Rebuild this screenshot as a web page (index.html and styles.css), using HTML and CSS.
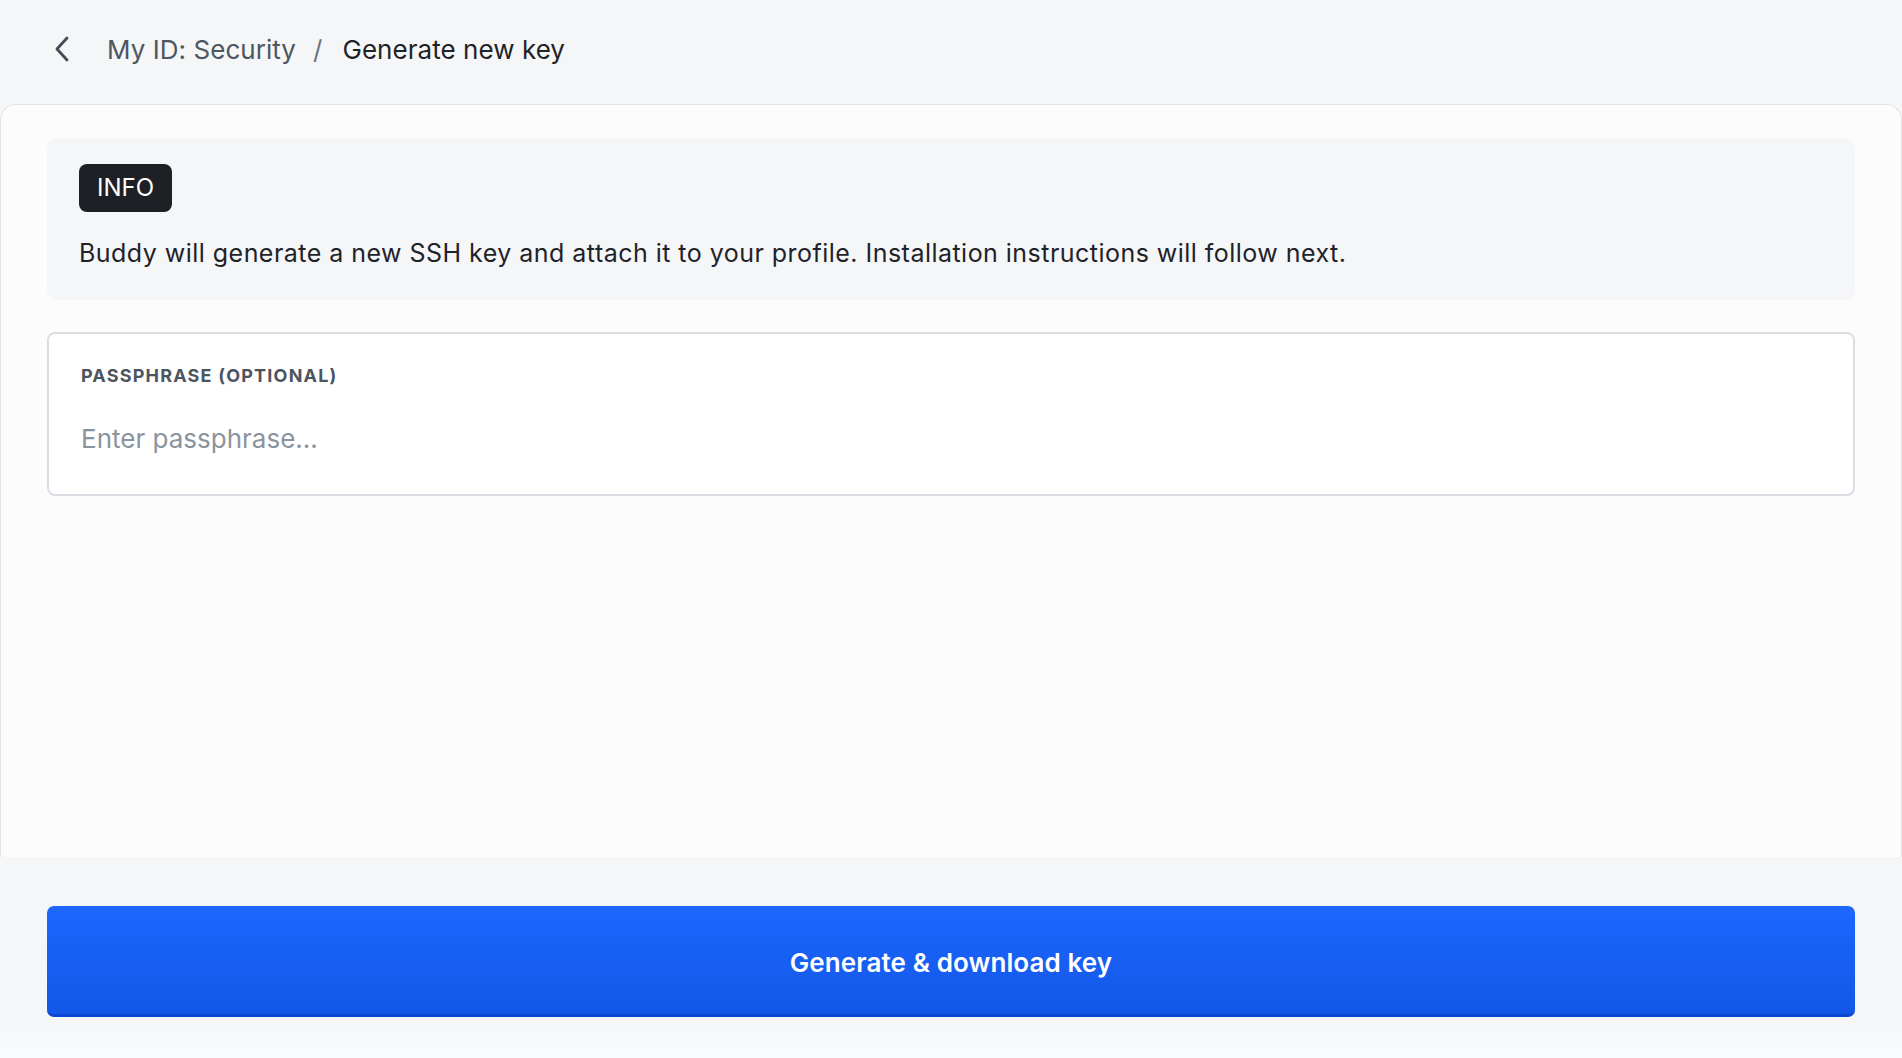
FILE: index.html
```html
<!DOCTYPE html>
<html>
<head>
  <meta charset="UTF-8" />
  <title>Generate new key</title>
  <link rel="stylesheet" href="styles.css">
</head>
<body>

<div class="topbar">
  <a class="back" href="#">
    <svg width="16" height="26" viewBox="0 0 16 26"><path d="M13 2 L3 13 L13 24" fill="none" stroke="#434b55" stroke-width="2.8" stroke-linecap="round" stroke-linejoin="round"/></svg>
  </a>
  <span class="crumb">My ID: Security</span>
  <span class="sep">/</span>
  <span class="crumb current">Generate new key</span>
</div>

<div class="card">
  <div class="info">
    <span class="badge">INFO</span>
    <p>Buddy will generate a new SSH key and attach it to your profile. Installation instructions will follow next.</p>
  </div>

  <div class="field">
    <label for="passphrase">Passphrase (optional)</label>
    <input type="text" id="passphrase" placeholder="Enter passphrase..." />
  </div>
</div>

<div class="footer">
  <button class="primary">Generate &amp; download key</button>
</div>

</body>
</html>
```

FILE: styles.css
```css
body {
  margin: 0;
  background: #f5f6f8;
  font-family: Inter, "Noto Sans", sans-serif;
  color: #1f2328;
}

.topbar {
  height: 104px;
  box-sizing: border-box;
  padding: 0 0 6px 54px;
  display: flex;
  align-items: center;
  font-size: 26px;
  letter-spacing: 0.05px;
}
.back { display: flex; margin-right: 37px; }
.crumb { color: #4d5661; }
.crumb.current { color: #1f2328; }
.sep { color: #6b7480; margin: 0 20px 0 17px; }

.card {
  height: 753px;
  box-sizing: border-box;
  background: #fcfcfd;
  border: 1px solid #e1e4e8;
  border-bottom: none;
  border-radius: 16px 16px 0 0;
  padding: 33px 46px;
}

.info {
  background: #f5f6f8;
  border-radius: 10px;
  padding: 26px 32px 29px;
}
.badge {
  display: inline-block;
  background: #1d2025;
  color: #fff;
  border-radius: 8px;
  height: 48px;
  line-height: 48px;
  padding: 0 18px;
  font-size: 24px;
}
.info p {
  margin: 23px 0 0;
  font-size: 25px;
  letter-spacing: 0.47px;
  line-height: 36px;
}

.field {
  margin-top: 32px;
  background: #fff;
  border: 2px solid #dadee3;
  border-radius: 8px;
  height: 164px;
  box-sizing: border-box;
  padding: 31px 32px 29px;
}
.field label {
  display: block;
  text-transform: uppercase;
  font-size: 18px;
  font-weight: 650;
  color: #4b5560;
  letter-spacing: 1.2px;
}
.field input {
  display: block;
  width: 100%;
  margin-top: 37px;
  border: none;
  outline: none;
  padding: 0;
  font-family: inherit;
  font-size: 26px;
  color: #1f2328;
  background: transparent;
}
.field input::placeholder { color: #8a939e; }

.footer {
  height: 201px;
  box-sizing: border-box;
  padding: 49px 47px;
  background: linear-gradient(#f5f6f8 80%, #fafbfc);
}
.primary {
  width: 100%;
  height: 111px;
  border: none;
  border-bottom: 3px solid #0a48d4;
  border-radius: 7px;
  background: linear-gradient(#1d66fe, #1257e8);
  color: #fff;
  font-family: inherit;
  font-size: 26px;
  font-weight: 600;
  letter-spacing: 0.1px;
  padding-top: 5px;
  cursor: pointer;
}
```
